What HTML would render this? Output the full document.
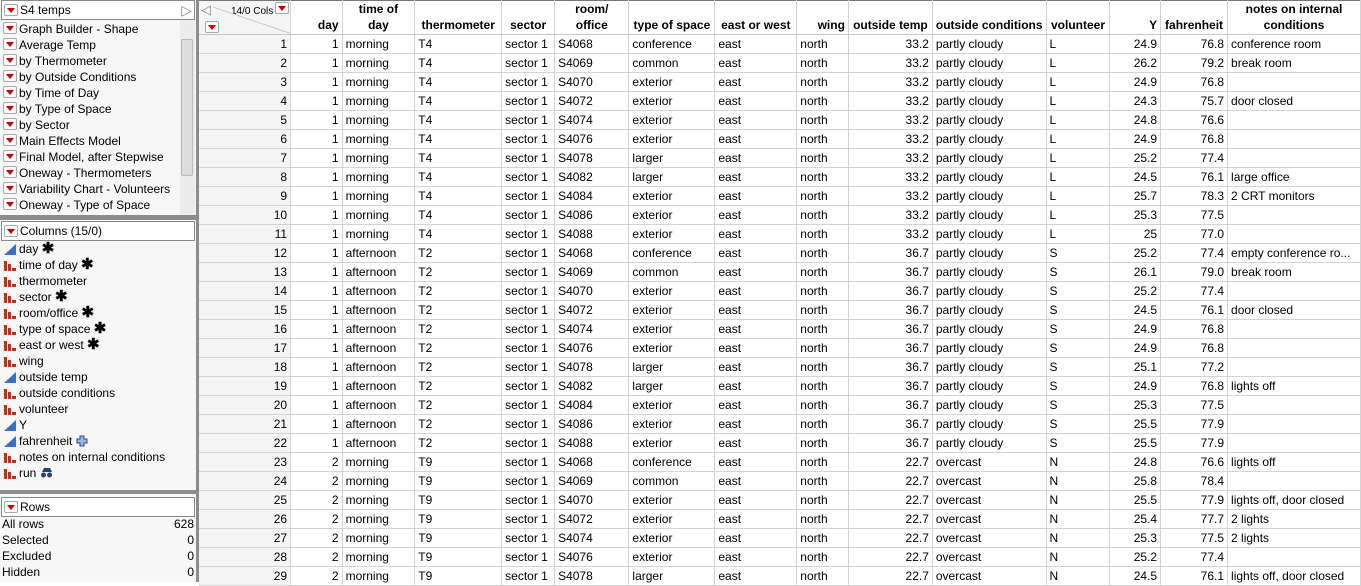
<!DOCTYPE html>
<html><head><meta charset="utf-8"><style>
*{box-sizing:border-box;margin:0;padding:0}
body{width:1361px;height:582px;overflow:hidden;background:#fff;font-family:"Liberation Sans",sans-serif;font-size:12px;color:#000;position:relative}
.left{position:absolute;left:0;top:0;width:196px;height:582px;background:#f7f7f7}
.div{position:absolute;left:196px;top:0;width:3px;height:582px;background:#8c8c8c}
.box{position:absolute;left:1px;width:194px;height:20px;background:#fff;border:1px solid #8a8a8a;padding-left:18px;line-height:18px;font-size:12px}
.tri{position:absolute;width:14px;height:12px;border:1px solid #aaa;border-radius:2px;background:#fff}
.tri:after{content:"";position:absolute;left:2px;top:3px;border-left:4px solid transparent;border-right:4px solid transparent;border-top:5px solid #c00}
.item{position:absolute;left:19px;height:16px;line-height:16px;white-space:nowrap}
.hbar{position:absolute;left:0;width:196px;height:5px;background:#8c8c8c}
.ic{position:absolute;left:3px;width:13px;height:12px}
table{position:absolute;left:199px;top:0;border-collapse:collapse;table-layout:fixed;border-top:1px solid #777}
td,th{height:19px;border-right:1px solid #d4d4d4;border-bottom:1px solid #d4d4d4;padding:0 3px;white-space:nowrap;overflow:hidden;text-overflow:ellipsis;font-size:12px;line-height:18px}
th{height:34px;font-weight:bold;vertical-align:bottom;text-align:center;line-height:16px;padding-bottom:1px;border-bottom:1px solid #c8c8c8}
td.n,th.n{text-align:right}
td.r{background:#f5f5f5;text-align:right;border-right:1px solid #d4d4d4}
th.r{background:#f5f5f5;position:relative}
</style></head><body>
<div class="left">
 <div class="box" style="top:0">S4 temps<div class="tri" style="left:2px;top:3px"></div><span style="position:absolute;right:2px;top:0;color:#888;font-size:14px">▷</span></div>
 <div style="position:absolute;left:180px;top:20px;width:15px;height:195px;background:#ececec"></div>
 <div style="position:absolute;left:181px;top:39px;width:12px;height:137px;background:#dcdcdc;border:1px solid #bbb;border-radius:2px"></div>
 <div class="tri" style="left:3px;top:22px"></div><div class="item" style="top:21px">Graph Builder - Shape</div>
 <div class="tri" style="left:3px;top:38px"></div><div class="item" style="top:37px">Average Temp</div>
 <div class="tri" style="left:3px;top:54px"></div><div class="item" style="top:53px">by Thermometer</div>
 <div class="tri" style="left:3px;top:70px"></div><div class="item" style="top:69px">by Outside Conditions</div>
 <div class="tri" style="left:3px;top:86px"></div><div class="item" style="top:85px">by Time of Day</div>
 <div class="tri" style="left:3px;top:102px"></div><div class="item" style="top:101px">by Type of Space</div>
 <div class="tri" style="left:3px;top:118px"></div><div class="item" style="top:117px">by Sector</div>
 <div class="tri" style="left:3px;top:134px"></div><div class="item" style="top:133px">Main Effects Model</div>
 <div class="tri" style="left:3px;top:150px"></div><div class="item" style="top:149px">Final Model, after Stepwise</div>
 <div class="tri" style="left:3px;top:166px"></div><div class="item" style="top:165px">Oneway - Thermometers</div>
 <div class="tri" style="left:3px;top:182px"></div><div class="item" style="top:181px">Variability Chart - Volunteers</div>
 <div class="tri" style="left:3px;top:198px"></div><div class="item" style="top:197px">Oneway - Type of Space</div>
 <div class="hbar" style="top:215px"></div>
 <div class="box" style="top:221px">Columns (15/0)<div class="tri" style="left:2px;top:3px"></div></div>
 <div class="hbar" style="top:490px;height:4px"></div>
 <div class="box" style="top:497px">Rows<div class="tri" style="left:2px;top:3px"></div></div>
 <div style="position:absolute;left:2px;top:516px;width:192px;line-height:16px">
  <div>All rows<span style="float:right">628</span></div>
  <div>Selected<span style="float:right">0</span></div>
  <div>Excluded<span style="float:right">0</span></div>
  <div>Hidden<span style="float:right">0</span></div>
 </div>
</div>
<div class="div"></div>
<svg width="0" height="0" style="position:absolute"><defs>
<g id="cont"><path d="M1 12 L13 1 L13 12 Z" fill="#3a6fc4"/></g>
<g id="nom"><rect x="1" y="2" width="3" height="10" fill="#c62b1c"/><rect x="5" y="5" width="3" height="7" fill="#c62b1c"/><rect x="9" y="9" width="4" height="3" fill="#c62b1c"/></g>
</defs></svg>
<div style="position:absolute;left:0;top:241px;width:196px;font-size:12px">
 <div class="item" style="top:0"><svg style="left:-16px;top:2px;position:absolute" width="13" height="12"><use href="#cont"/></svg>day <b style="font-size:15px">✱</b></div>
 <div class="item" style="top:16px"><svg style="left:-16px;top:2px;position:absolute" width="13" height="12"><use href="#nom"/></svg>time of day <b style="font-size:15px">✱</b></div>
 <div class="item" style="top:32px"><svg style="left:-16px;top:2px;position:absolute" width="13" height="12"><use href="#nom"/></svg>thermometer</div>
 <div class="item" style="top:48px"><svg style="left:-16px;top:2px;position:absolute" width="13" height="12"><use href="#nom"/></svg>sector <b style="font-size:15px">✱</b></div>
 <div class="item" style="top:64px"><svg style="left:-16px;top:2px;position:absolute" width="13" height="12"><use href="#nom"/></svg>room/office <b style="font-size:15px">✱</b></div>
 <div class="item" style="top:80px"><svg style="left:-16px;top:2px;position:absolute" width="13" height="12"><use href="#nom"/></svg>type of space <b style="font-size:15px">✱</b></div>
 <div class="item" style="top:96px"><svg style="left:-16px;top:2px;position:absolute" width="13" height="12"><use href="#nom"/></svg>east or west <b style="font-size:15px">✱</b></div>
 <div class="item" style="top:112px"><svg style="left:-16px;top:2px;position:absolute" width="13" height="12"><use href="#nom"/></svg>wing</div>
 <div class="item" style="top:128px"><svg style="left:-16px;top:2px;position:absolute" width="13" height="12"><use href="#cont"/></svg>outside temp</div>
 <div class="item" style="top:144px"><svg style="left:-16px;top:2px;position:absolute" width="13" height="12"><use href="#nom"/></svg>outside conditions</div>
 <div class="item" style="top:160px"><svg style="left:-16px;top:2px;position:absolute" width="13" height="12"><use href="#nom"/></svg>volunteer</div>
 <div class="item" style="top:176px"><svg style="left:-16px;top:2px;position:absolute" width="13" height="12"><use href="#cont"/></svg>Y</div>
 <div class="item" style="top:192px"><svg style="left:-16px;top:2px;position:absolute" width="13" height="12"><use href="#cont"/></svg>fahrenheit <svg width="12" height="12" style="vertical-align:-2px"><path d="M4 1h4v3h3v4H8v3H4V8H1V4h3z" fill="#9fb8e0" stroke="#2a4a8a"/></svg></div>
 <div class="item" style="top:208px"><svg style="left:-16px;top:2px;position:absolute" width="13" height="12"><use href="#nom"/></svg>notes on internal conditions</div>
 <div class="item" style="top:224px"><svg style="left:-16px;top:2px;position:absolute" width="13" height="12"><use href="#nom"/></svg>run <svg width="13" height="11" style="vertical-align:-1px"><path d="M2 5 L4 1 H10 L12 5 Z" fill="#2a3f7a"/><circle cx="3.5" cy="8" r="2.5" fill="#2a3f7a"/><circle cx="9.5" cy="8" r="2.5" fill="#2a3f7a"/></svg></div>
</div>
<table>
<colgroup><col style="width:93px"><col style="width:52px"><col style="width:73px"><col style="width:87px"><col style="width:53px"><col style="width:75px"><col style="width:86px"><col style="width:82px"><col style="width:52px"><col style="width:84px"><col style="width:113px"><col style="width:64px"><col style="width:51px"><col style="width:67px"><col style="width:133px"></colgroup>
<tr><th class="r"><span style="position:absolute;left:2px;top:1px;color:#888;font-size:13px;font-weight:normal">◁</span><span style="position:absolute;left:32px;top:3px;font-weight:normal;font-size:10px">14/0 Cols</span><div class="tri" style="left:76px;top:1px"></div><div class="tri" style="left:6px;top:20px"></div><svg style="position:absolute;left:0;top:0" width="93" height="34"><line x1="14" y1="6" x2="93" y2="33" stroke="#ccc"/></svg></th><th class="n">day</th><th>time of<br>day</th><th>thermometer</th><th>sector</th><th>room/<br>office</th><th>type of space</th><th>east or west</th><th class="n">wing</th><th>outside temp</th><th>outside conditions</th><th>volunteer</th><th class="n">Y</th><th>fahrenheit</th><th>notes on internal<br>conditions</th></tr>
<tr><td class="r">1</td><td class="n">1</td><td>morning</td><td>T4</td><td>sector 1</td><td>S4068</td><td>conference</td><td>east</td><td>north</td><td class="n">33.2</td><td>partly cloudy</td><td>L</td><td class="n">24.9</td><td class="n">76.8</td><td>conference room</td></tr>
<tr><td class="r">2</td><td class="n">1</td><td>morning</td><td>T4</td><td>sector 1</td><td>S4069</td><td>common</td><td>east</td><td>north</td><td class="n">33.2</td><td>partly cloudy</td><td>L</td><td class="n">26.2</td><td class="n">79.2</td><td>break room</td></tr>
<tr><td class="r">3</td><td class="n">1</td><td>morning</td><td>T4</td><td>sector 1</td><td>S4070</td><td>exterior</td><td>east</td><td>north</td><td class="n">33.2</td><td>partly cloudy</td><td>L</td><td class="n">24.9</td><td class="n">76.8</td><td></td></tr>
<tr><td class="r">4</td><td class="n">1</td><td>morning</td><td>T4</td><td>sector 1</td><td>S4072</td><td>exterior</td><td>east</td><td>north</td><td class="n">33.2</td><td>partly cloudy</td><td>L</td><td class="n">24.3</td><td class="n">75.7</td><td>door closed</td></tr>
<tr><td class="r">5</td><td class="n">1</td><td>morning</td><td>T4</td><td>sector 1</td><td>S4074</td><td>exterior</td><td>east</td><td>north</td><td class="n">33.2</td><td>partly cloudy</td><td>L</td><td class="n">24.8</td><td class="n">76.6</td><td></td></tr>
<tr><td class="r">6</td><td class="n">1</td><td>morning</td><td>T4</td><td>sector 1</td><td>S4076</td><td>exterior</td><td>east</td><td>north</td><td class="n">33.2</td><td>partly cloudy</td><td>L</td><td class="n">24.9</td><td class="n">76.8</td><td></td></tr>
<tr><td class="r">7</td><td class="n">1</td><td>morning</td><td>T4</td><td>sector 1</td><td>S4078</td><td>larger</td><td>east</td><td>north</td><td class="n">33.2</td><td>partly cloudy</td><td>L</td><td class="n">25.2</td><td class="n">77.4</td><td></td></tr>
<tr><td class="r">8</td><td class="n">1</td><td>morning</td><td>T4</td><td>sector 1</td><td>S4082</td><td>larger</td><td>east</td><td>north</td><td class="n">33.2</td><td>partly cloudy</td><td>L</td><td class="n">24.5</td><td class="n">76.1</td><td>large office</td></tr>
<tr><td class="r">9</td><td class="n">1</td><td>morning</td><td>T4</td><td>sector 1</td><td>S4084</td><td>exterior</td><td>east</td><td>north</td><td class="n">33.2</td><td>partly cloudy</td><td>L</td><td class="n">25.7</td><td class="n">78.3</td><td>2 CRT monitors</td></tr>
<tr><td class="r">10</td><td class="n">1</td><td>morning</td><td>T4</td><td>sector 1</td><td>S4086</td><td>exterior</td><td>east</td><td>north</td><td class="n">33.2</td><td>partly cloudy</td><td>L</td><td class="n">25.3</td><td class="n">77.5</td><td></td></tr>
<tr><td class="r">11</td><td class="n">1</td><td>morning</td><td>T4</td><td>sector 1</td><td>S4088</td><td>exterior</td><td>east</td><td>north</td><td class="n">33.2</td><td>partly cloudy</td><td>L</td><td class="n">25</td><td class="n">77.0</td><td></td></tr>
<tr><td class="r">12</td><td class="n">1</td><td>afternoon</td><td>T2</td><td>sector 1</td><td>S4068</td><td>conference</td><td>east</td><td>north</td><td class="n">36.7</td><td>partly cloudy</td><td>S</td><td class="n">25.2</td><td class="n">77.4</td><td>empty conference ro...</td></tr>
<tr><td class="r">13</td><td class="n">1</td><td>afternoon</td><td>T2</td><td>sector 1</td><td>S4069</td><td>common</td><td>east</td><td>north</td><td class="n">36.7</td><td>partly cloudy</td><td>S</td><td class="n">26.1</td><td class="n">79.0</td><td>break room</td></tr>
<tr><td class="r">14</td><td class="n">1</td><td>afternoon</td><td>T2</td><td>sector 1</td><td>S4070</td><td>exterior</td><td>east</td><td>north</td><td class="n">36.7</td><td>partly cloudy</td><td>S</td><td class="n">25.2</td><td class="n">77.4</td><td></td></tr>
<tr><td class="r">15</td><td class="n">1</td><td>afternoon</td><td>T2</td><td>sector 1</td><td>S4072</td><td>exterior</td><td>east</td><td>north</td><td class="n">36.7</td><td>partly cloudy</td><td>S</td><td class="n">24.5</td><td class="n">76.1</td><td>door closed</td></tr>
<tr><td class="r">16</td><td class="n">1</td><td>afternoon</td><td>T2</td><td>sector 1</td><td>S4074</td><td>exterior</td><td>east</td><td>north</td><td class="n">36.7</td><td>partly cloudy</td><td>S</td><td class="n">24.9</td><td class="n">76.8</td><td></td></tr>
<tr><td class="r">17</td><td class="n">1</td><td>afternoon</td><td>T2</td><td>sector 1</td><td>S4076</td><td>exterior</td><td>east</td><td>north</td><td class="n">36.7</td><td>partly cloudy</td><td>S</td><td class="n">24.9</td><td class="n">76.8</td><td></td></tr>
<tr><td class="r">18</td><td class="n">1</td><td>afternoon</td><td>T2</td><td>sector 1</td><td>S4078</td><td>larger</td><td>east</td><td>north</td><td class="n">36.7</td><td>partly cloudy</td><td>S</td><td class="n">25.1</td><td class="n">77.2</td><td></td></tr>
<tr><td class="r">19</td><td class="n">1</td><td>afternoon</td><td>T2</td><td>sector 1</td><td>S4082</td><td>larger</td><td>east</td><td>north</td><td class="n">36.7</td><td>partly cloudy</td><td>S</td><td class="n">24.9</td><td class="n">76.8</td><td>lights off</td></tr>
<tr><td class="r">20</td><td class="n">1</td><td>afternoon</td><td>T2</td><td>sector 1</td><td>S4084</td><td>exterior</td><td>east</td><td>north</td><td class="n">36.7</td><td>partly cloudy</td><td>S</td><td class="n">25.3</td><td class="n">77.5</td><td></td></tr>
<tr><td class="r">21</td><td class="n">1</td><td>afternoon</td><td>T2</td><td>sector 1</td><td>S4086</td><td>exterior</td><td>east</td><td>north</td><td class="n">36.7</td><td>partly cloudy</td><td>S</td><td class="n">25.5</td><td class="n">77.9</td><td></td></tr>
<tr><td class="r">22</td><td class="n">1</td><td>afternoon</td><td>T2</td><td>sector 1</td><td>S4088</td><td>exterior</td><td>east</td><td>north</td><td class="n">36.7</td><td>partly cloudy</td><td>S</td><td class="n">25.5</td><td class="n">77.9</td><td></td></tr>
<tr><td class="r">23</td><td class="n">2</td><td>morning</td><td>T9</td><td>sector 1</td><td>S4068</td><td>conference</td><td>east</td><td>north</td><td class="n">22.7</td><td>overcast</td><td>N</td><td class="n">24.8</td><td class="n">76.6</td><td>lights off</td></tr>
<tr><td class="r">24</td><td class="n">2</td><td>morning</td><td>T9</td><td>sector 1</td><td>S4069</td><td>common</td><td>east</td><td>north</td><td class="n">22.7</td><td>overcast</td><td>N</td><td class="n">25.8</td><td class="n">78.4</td><td></td></tr>
<tr><td class="r">25</td><td class="n">2</td><td>morning</td><td>T9</td><td>sector 1</td><td>S4070</td><td>exterior</td><td>east</td><td>north</td><td class="n">22.7</td><td>overcast</td><td>N</td><td class="n">25.5</td><td class="n">77.9</td><td>lights off, door closed</td></tr>
<tr><td class="r">26</td><td class="n">2</td><td>morning</td><td>T9</td><td>sector 1</td><td>S4072</td><td>exterior</td><td>east</td><td>north</td><td class="n">22.7</td><td>overcast</td><td>N</td><td class="n">25.4</td><td class="n">77.7</td><td>2 lights</td></tr>
<tr><td class="r">27</td><td class="n">2</td><td>morning</td><td>T9</td><td>sector 1</td><td>S4074</td><td>exterior</td><td>east</td><td>north</td><td class="n">22.7</td><td>overcast</td><td>N</td><td class="n">25.3</td><td class="n">77.5</td><td>2 lights</td></tr>
<tr><td class="r">28</td><td class="n">2</td><td>morning</td><td>T9</td><td>sector 1</td><td>S4076</td><td>exterior</td><td>east</td><td>north</td><td class="n">22.7</td><td>overcast</td><td>N</td><td class="n">25.2</td><td class="n">77.4</td><td></td></tr>
<tr><td class="r">29</td><td class="n">2</td><td>morning</td><td>T9</td><td>sector 1</td><td>S4078</td><td>larger</td><td>east</td><td>north</td><td class="n">22.7</td><td>overcast</td><td>N</td><td class="n">24.5</td><td class="n">76.1</td><td>lights off, door closed</td></tr>
</table>
</body></html>
